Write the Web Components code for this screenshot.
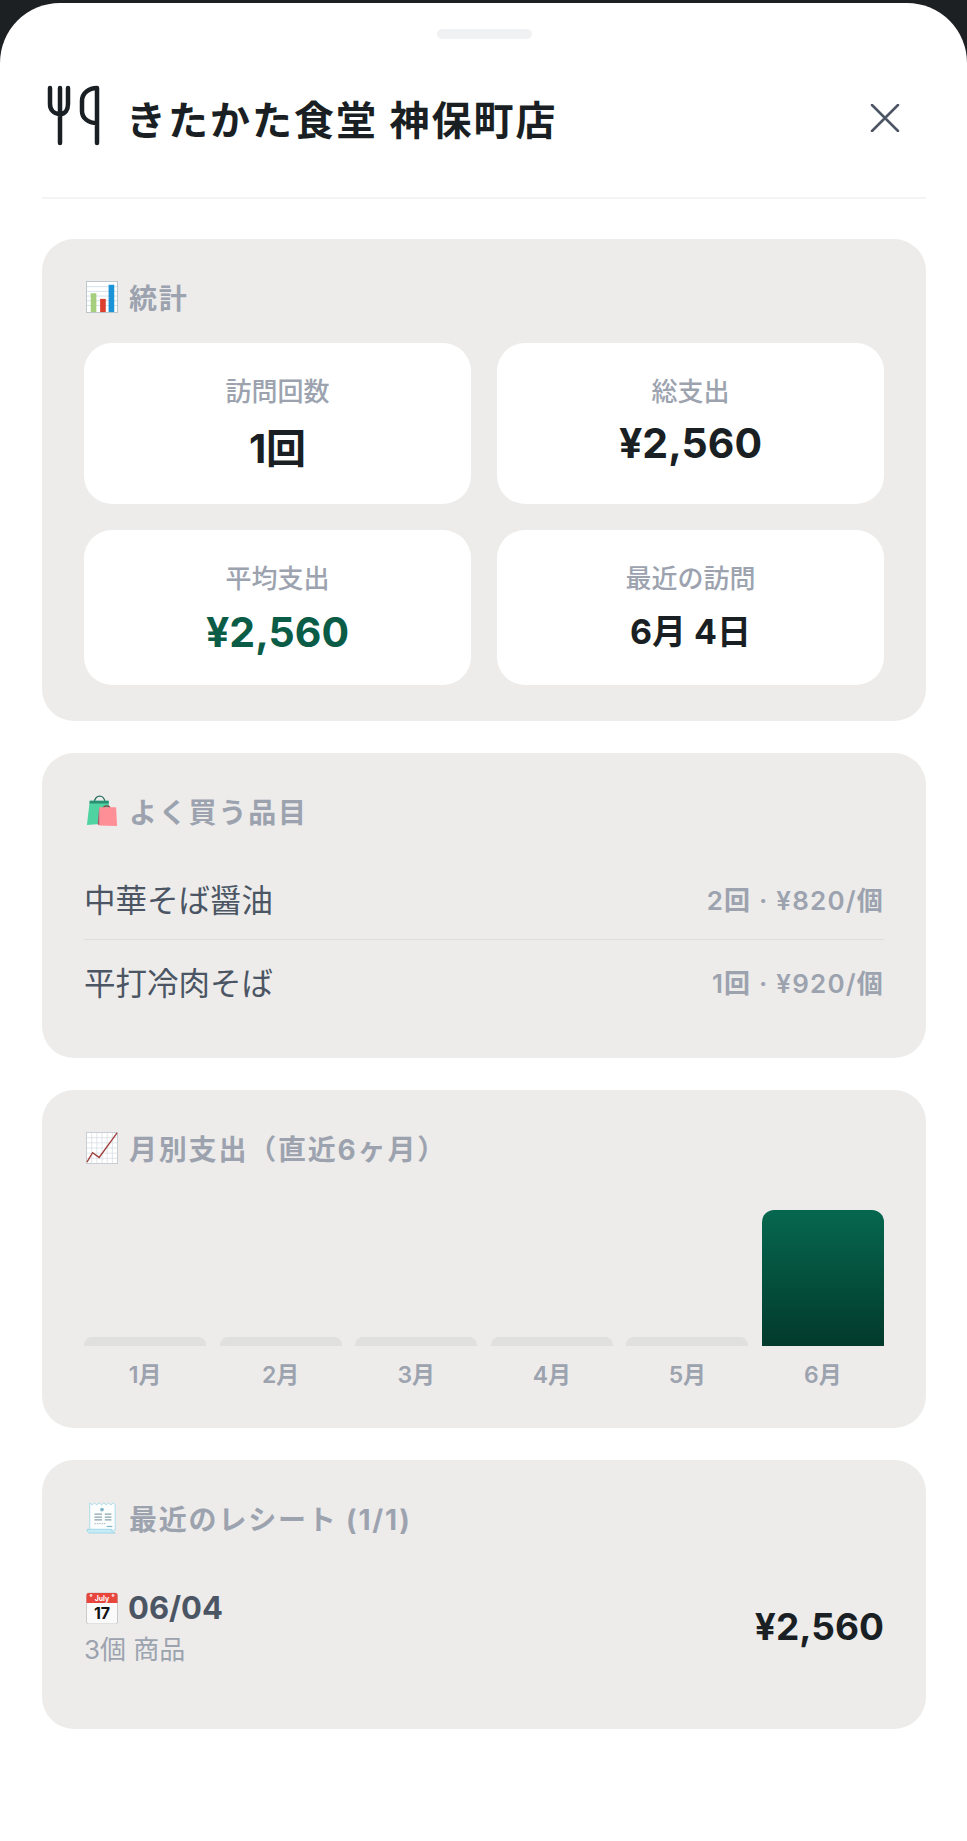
<!DOCTYPE html>
<html lang="ja">
<head>
<meta charset="utf-8">
<title>きたかた食堂 神保町店</title>
<style>
  html, body { margin: 0; background: #1d2023; }
  body { padding-top: 3px; font-family: Inter, "Noto Sans CJK JP", sans-serif; }
</style>
</head>
<body>
<store-sheet>
  <sheet-header name="きたかた食堂 神保町店"></sheet-header>

  <info-card heading="統計" icon="chart">
    <div style="display:grid;grid-template-columns:1fr 1fr;gap:26px">
      <stat-tile label="訪問回数" value="1回" size="40" tall></stat-tile>
      <stat-tile label="総支出" value="¥2,560" size="41" tall top></stat-tile>
      <stat-tile label="平均支出" value="¥2,560" size="41" color="#0a5c47"></stat-tile>
      <stat-tile label="最近の訪問" value="6月 4日" size="34"></stat-tile>
    </div>
  </info-card>

  <info-card heading="よく買う品目" icon="bags">
    <item-row name="中華そば醤油" meta="2回 · ¥820/個"></item-row>
    <item-row name="平打冷肉そば" meta="1回 · ¥920/個" last></item-row>
  </info-card>

  <info-card heading="月別支出（直近6ヶ月）" icon="trend">
    <month-bars></month-bars>
  </info-card>

  <info-card heading="最近のレシート (1/1)" icon="receipt">
    <receipt-row date="06/04" sub="3個 商品" total="¥2,560"></receipt-row>
  </info-card>
</store-sheet>

<script>
const ICONS = {
  chart: `<svg width="32" height="32" viewBox="0 0 34 34"><rect x=".5" y=".5" width="33" height="33" fill="#fff" stroke="#b9c4c9"/><path d="M1 6h32M1 11h32M1 16h32M1 21h32M1 26h32" stroke="#cfe0ea"/><rect x="5" y="13" width="6" height="20" fill="#a5cf7c"/><rect x="15" y="19" width="6" height="14" fill="#dc3f2f"/><rect x="24" y="4" width="6" height="29" fill="#1c93d6"/></svg>`,
  bags: `<svg width="32" height="32" viewBox="0 0 34 34"><path d="M9 8c0-9 11-9 11 0" fill="none" stroke="#27705f" stroke-width="1.4"/><path d="M4 6h20l2 24-25 2z" fill="#4fd3a0"/><path d="M4 6h20l.3 3H3.7z" fill="#2c8f74"/><path d="M18 16c0-6 8-6 8 0" fill="none" stroke="#8a3a4a" stroke-width="1.3"/><path d="M14 13h18l1 20-19-.5z" fill="#ff8f96"/><path d="M14 13l-1.500 18 1.500 1.500z" fill="#b5506a"/></svg>`,
  trend: `<svg width="32" height="32" viewBox="0 0 34 34"><rect x=".5" y=".5" width="33" height="33" fill="#fff" stroke="#c5cdd2"/><path d="M6 1v32M11.500 1v32M17 1v32M22.500 1v32M28 1v32M1 6h32M1 11.500h32M1 17h32M1 22.500h32M1 28h32" stroke="#d5dde2" stroke-width=".8"/><path d="M1 32l6-10 7 5L33 1" fill="none" stroke="#a0423f" stroke-width="1.500"/></svg>`,
  receipt: `<svg width="32" height="32" viewBox="0 0 34 34"><path d="M4 1l2.500 2L9 1l2.500 2L14 1l2.500 2L19 1l2.500 2L24 1l2.500 2L29 1l2 2v27H6c-2 0-2-1-2-3z" fill="#fcfdfd" stroke="#a6dcea"/><path d="M1 29h26c0 2 1 3 4 4H4c-2 0-3-2-3-4z" fill="#c8ecf5" stroke="#83cfe3" stroke-width=".7"/><circle cx="17" cy="8" r="2" fill="#7fb8c8"/><path d="M9 13h8M20 13h7M9 16h8M20 16h7M9 19h8M20 19h7" stroke="#8aa3ad" stroke-width="1.300"/><path d="M9 23h12" stroke="#9fb1b9" stroke-dasharray="1.500 1"/><path d="M22 26h6" stroke="#7fb8c8" stroke-width="1.300"/></svg>`,
  calendar: `<svg width="32" height="32" viewBox="0 0 32 32"><rect x=".5" y="1" width="31" height="31" rx="2" fill="#fafafa" stroke="#c9c9c9"/><path d="M.5 11V3a2 2 0 0 1 2-2h27a2 2 0 0 1 2 2v8z" fill="#e8453c"/><circle cx="5" cy="3.500" r="1.400" fill="#f6d0cd"/><circle cx="27" cy="3.500" r="1.400" fill="#f6d0cd"/><text x="16" y="8.800" font-size="7" text-anchor="middle" fill="#fff" font-family="Inter">July</text><text x="16" y="27" font-size="16" font-weight="700" text-anchor="middle" fill="#111" font-family="Inter">17</text></svg>`
};

class StoreSheet extends HTMLElement {
  constructor() {
    super();
    this.attachShadow({ mode: 'open' }).innerHTML = `
      <style>
        :host { display: block; background: #fff; border-radius: 60px 60px 0 0; height: 1838px; box-sizing: border-box; padding: 26px 41px 0 42px; }
        .handle { width: 95px; height: 10px; border-radius: 5px; background: #f0f1f2; margin: 0 auto 32px; }
        .stack { display: flex; flex-direction: column; gap: 32px; }
      </style>
      <div class="handle"></div>
      <div class="stack"><slot></slot></div>`;
  }
}

class SheetHeader extends HTMLElement {
  connectedCallback() {
    this.attachShadow({ mode: 'open' }).innerHTML = `
      <style>
        :host { display: flex; align-items: center; height: 94px; border-bottom: 2px solid #f3f4f6; padding-bottom: 32px; margin-bottom: 8px; }
        .title { flex: 1; font-size: 40px; font-weight: 700; color: #1a1f24; margin-left: 22px; white-space: nowrap; letter-spacing: 2px; }
        svg.fork { flex: none; align-self: flex-start; margin: 14px 0 0 2px; }
        svg.close { flex: none; margin-right: 26px; }
      </style>
      <svg class="fork" width="60" height="62" viewBox="0 0 60 62" fill="none" stroke="#1a1f24" stroke-width="4.500" stroke-linecap="round" stroke-linejoin="round">
        <path d="M6 3v16c0 6 4 10 10 10M24 3v16c0 6-3 10-8 10M16 3v55"/>
        <path d="M53 3v55M53 38c-9 0-15-5-15-12V16c0-8 7-13 15-13"/>
      </svg>
      <div class="title">${this.getAttribute('name')}</div>
      <svg class="close" width="30" height="28" viewBox="0 0 30 28" fill="none" stroke="#4b5563" stroke-width="2.500" stroke-linecap="round">
        <path d="M2 1l26 26M28 1L2 27"/>
      </svg>`;
  }
}

class InfoCard extends HTMLElement {
  connectedCallback() {
    this.attachShadow({ mode: 'open' }).innerHTML = `
      <style>
        :host { display: block; background: #edeceb; border-radius: 32px; padding: 42px 42px 36px; }
        .head { display: flex; align-items: center; gap: 11px; height: 32px; margin-bottom: 30px; font-size: 28px; font-weight: 700; letter-spacing: 1.800px; color: #9ca3af; white-space: nowrap; }
        svg { display: block; flex: none; margin-left: 2px; }
      </style>
      <div class="head">${ICONS[this.getAttribute('icon')]}<span>${this.getAttribute('heading')}</span></div>
      <slot></slot>`;
  }
}

class StatTile extends HTMLElement {
  connectedCallback() {
    const color = this.getAttribute('color') || '#1a1f24';
    const tall = this.hasAttribute('tall');
    const gap = tall ? (this.hasAttribute('top') ? 11 : 17) : 13;
    this.attachShadow({ mode: 'open' }).innerHTML = `
      <style>
        :host { display: flex; flex-direction: column; align-items: center; background: #fff; border-radius: 28px; height: ${tall ? 161 : 155}px; box-sizing: border-box; padding-top: 33px; }
        .label { font-size: 26px; font-weight: 500; line-height: 32px; color: #9ca3af; }
        .value { font-size: ${this.getAttribute('size')}px; font-weight: 700; line-height: 48px; margin-top: ${gap}px; color: ${color}; white-space: nowrap; }
      </style>
      <div class="label">${this.getAttribute('label')}</div>
      <div class="value">${this.getAttribute('value')}</div>`;
  }
}

class ItemRow extends HTMLElement {
  connectedCallback() {
    this.attachShadow({ mode: 'open' }).innerHTML = `
      <style>
        :host { display: flex; align-items: center; justify-content: space-between; height: 82px; }
        :host(:not([last])) { border-bottom: 1px solid #dedede; }
        .name { font-size: 31.500px; color: #4b5563; }
        .meta { font-size: 26px; font-weight: 600; letter-spacing: 1.200px; color: #9ca3af; }
      </style>
      <span class="name">${this.getAttribute('name')}</span>
      <span class="meta">${this.getAttribute('meta')}</span>`;
  }
}

class MonthBars extends HTMLElement {
  connectedCallback() {
    const months = [['1月', 0], ['2月', 0], ['3月', 0], ['4月', 0], ['5月', 0], ['6月', 1]];
    const cols = months.map(([m, on]) => `
      <div class="col"><div class="bar ${on ? 'on' : ''}"></div><div class="m">${m}</div></div>`).join('');
    this.attachShadow({ mode: 'open' }).innerHTML = `
      <style>
        :host { display: grid; grid-template-columns: repeat(6, 1fr); column-gap: 13.500px; margin-top: 28px; margin-bottom: 2px; }
        .col { display: flex; flex-direction: column; align-items: stretch; justify-content: flex-end; height: 196px; }
        .bar { height: 9px; background: #e0e0df; border-radius: 8px 8px 0 0; }
        .bar.on { height: 136px; border-radius: 12px 12px 0 0; background: linear-gradient(#06674f, #023a2c); }
        .m { text-align: center; font-size: 23px; font-weight: 600; line-height: 30px; margin-top: 14px; color: #9ca3af; }
      </style>
      ${cols}`;
  }
}

class ReceiptRow extends HTMLElement {
  connectedCallback() {
    this.attachShadow({ mode: 'open' }).innerHTML = `
      <style>
        :host { display: flex; align-items: center; justify-content: space-between; margin-top: 53px; margin-bottom: 23px; }
        .date { display: flex; align-items: center; gap: 10px; font-size: 31px; font-weight: 700; line-height: 42px; color: #4b5563; }
        .date svg { margin-left: 2px; }
        .sub { font-size: 26px; line-height: 41px; color: #9ca3af; }
        .total { font-size: 37px; font-weight: 700; margin-top: -4px; color: #1a1f24; }
        svg { display: block; }
      </style>
      <div>
        <div class="date">${ICONS.calendar}<span>${this.getAttribute('date')}</span></div>
        <div class="sub">${this.getAttribute('sub')}</div>
      </div>
      <div class="total">${this.getAttribute('total')}</div>`;
  }
}

customElements.define('store-sheet', StoreSheet);
customElements.define('sheet-header', SheetHeader);
customElements.define('info-card', InfoCard);
customElements.define('stat-tile', StatTile);
customElements.define('item-row', ItemRow);
customElements.define('month-bars', MonthBars);
customElements.define('receipt-row', ReceiptRow);
</script>
</body>
</html>
